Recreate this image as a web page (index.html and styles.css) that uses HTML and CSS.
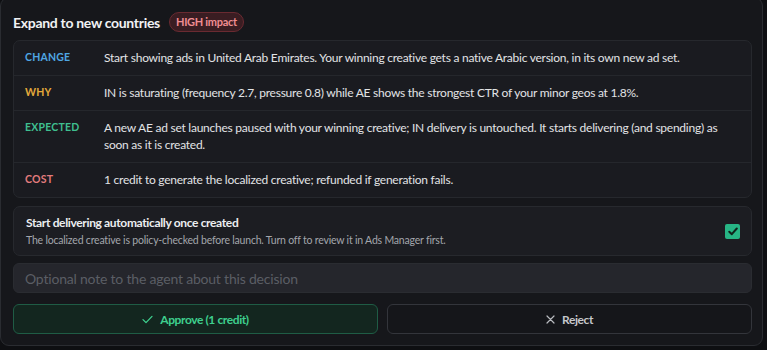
FILE: index.html
```html
<!DOCTYPE html>
<html>
<head>
<meta charset="utf-8">
<link rel="stylesheet" href="styles.css">
</head>
<body>
<div class="card">
  <div class="head">
    <h2 class="title">Expand to new countries</h2>
    <span class="badge">HIGH impact</span>
  </div>
  <div class="table">
    <div class="row">
      <div class="label change">CHANGE</div>
      <div class="text">Start showing ads in United Arab Emirates. Your winning creative gets a native Arabic version, in its own new ad set.</div>
    </div>
    <div class="row">
      <div class="label why">WHY</div>
      <div class="text">IN is saturating (frequency 2.7, pressure 0.8) while AE shows the strongest CTR of your minor geos at 1.8%.</div>
    </div>
    <div class="row">
      <div class="label expected">EXPECTED</div>
      <div class="text">A new AE ad set launches paused with your winning creative; IN delivery is untouched. It starts delivering (and spending) as soon as it is created.</div>
    </div>
    <div class="row">
      <div class="label cost">COST</div>
      <div class="text">1 credit to generate the localized creative; refunded if generation fails.</div>
    </div>
  </div>
  <div class="toggle">
    <div class="toggle-text">
      <div class="toggle-title">Start delivering automatically once created</div>
      <div class="toggle-desc">The localized creative is policy-checked before launch. Turn off to review it in Ads Manager first.</div>
    </div>
    <span class="check">
      <svg width="10" height="9" viewBox="0 0 10 9"><path d="M1.3 4.8 L3.8 7.2 L8.8 1.5" fill="none" stroke="#10241c" stroke-width="2" stroke-linecap="round" stroke-linejoin="round"/></svg>
    </span>
  </div>
  <input class="note" type="text" placeholder="Optional note to the agent about this decision">
  <div class="actions">
    <button class="btn approve">
      <svg width="11" height="9" viewBox="0 0 11 9"><path d="M1 4.6 L4 7.6 L10 1.4" fill="none" stroke="#3ecf8e" stroke-width="1.3" stroke-linecap="round" stroke-linejoin="round"/></svg>
      Approve (1 credit)
    </button>
    <button class="btn reject">
      <svg width="9" height="9" viewBox="0 0 9 9"><path d="M1 1 L8 8 M8 1 L1 8" fill="none" stroke="#b9bbc0" stroke-width="1.2" stroke-linecap="round"/></svg>
      Reject
    </button>
  </div>
</div>
</body>
</html>
```
FILE: styles.css
```css
* { box-sizing: border-box; }
html, body {
  margin: 0;
  background: #0e0f12;
}
body {
  font-family: Lato, "Noto Sans", sans-serif;
  color: #e4e5e8;
  width: 767px;
  height: 350px;
  overflow: hidden;
}
.card {
  margin: -3px 4px 0 0;
  width: 763px;
  height: 349px;
  background: #16171b;
  border: 1px solid #2a2c31;
  border-radius: 9px;
  padding: 13px 10px 0 12px;
  display: flex;
  flex-direction: column;
}
.head {
  display: flex;
  align-items: center;
  gap: 9px;
  height: 22px;
  margin-bottom: 7px;
}
.title {
  margin: 0;
  font-size: 14px;
  font-weight: 700;
  letter-spacing: -0.3px;
  color: #f1f2f4;
}
.badge {
  font-size: 11px;
  font-weight: 700;
  letter-spacing: -0.3px;
  color: #f08d92;
  background: #3a1d22;
  border: 1px solid #6a2a31;
  border-radius: 10px;
  padding: 1px 6px 1px;
  line-height: 16px;
}
.table {
  background: #1a1b20;
  border: 1px solid #26282d;
  border-radius: 7px;
}
.row {
  display: flex;
  padding: 8px 11px 9px;
  border-top: 1px solid #25272c;
}
.row:first-child { border-top: none; }
.label {
  width: 79px;
  flex: none;
  font-size: 10.5px;
  font-weight: 700;
  letter-spacing: 0.2px;
  line-height: 17px;
}
.change { color: #4fa6e3; }
.why { color: #e3a93b; }
.expected { color: #3fbf8f; }
.cost { color: #e37b7d; }
.text {
  font-size: 12px;
  letter-spacing: -0.25px;
  line-height: 17px;
  color: #e2e3e6;
}
.toggle {
  margin-top: 8px;
  background: #1c1d22;
  border: 1px solid #27292e;
  border-radius: 7px;
  padding: 7px 11px 7px 12px;
  display: flex;
  align-items: center;
  justify-content: space-between;
}
.toggle-title {
  font-size: 12px;
  font-weight: 700;
  letter-spacing: -0.35px;
  color: #eceef0;
  line-height: 17px;
}
.toggle-desc {
  font-size: 10.5px;
  letter-spacing: -0.2px;
  color: #a3a6ac;
  line-height: 16px;
  margin-top: 1px;
}
.check {
  width: 15px;
  height: 15px;
  border-radius: 2px;
  background: #27b585;
  display: flex;
  align-items: center;
  justify-content: center;
}
.note {
  margin-top: 7px;
  height: 30px;
  width: 100%;
  background: #25262c;
  border: 1px solid #2a2c31;
  border-radius: 6px;
  padding: 0 11px;
  font-family: inherit;
  font-size: 14px;
  letter-spacing: -0.2px;
  color: #e4e5e8;
  outline: none;
}
.note::placeholder { color: #5b5e65; }
.actions {
  margin-top: 11px;
  display: grid;
  grid-template-columns: 1fr 1fr;
  gap: 9px;
}
.btn {
  height: 30px;
  border-radius: 6px;
  font-family: inherit;
  font-size: 12px;
  font-weight: 700;
  letter-spacing: -0.4px;
  display: flex;
  align-items: center;
  justify-content: center;
  gap: 7px;
  cursor: pointer;
}
.approve {
  background: #13261f;
  border: 1px solid #1f5c45;
  color: #3ecf8e;
}
.reject {
  background: #15161a;
  border: 1px solid #33353b;
  color: #c5c7cb;
}
```
